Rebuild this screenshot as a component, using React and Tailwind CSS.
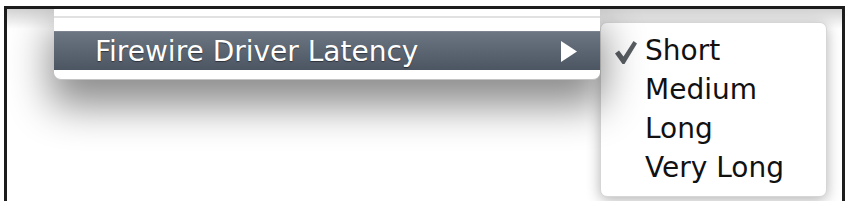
import React from "react";

const font = { fontFamily: '"DejaVu Sans", "Open Sans", sans-serif' };

function Check() {
  return (
    <svg width="22" height="23" viewBox="0 0 22 23" className="shrink-0">
      <path d="M0 12.5 L4 9.5 L8.5 15.5 L18.5 0 L22 2.5 L9.5 23 L7.5 23 Z" fill="#595e63" />
    </svg>
  );
}

export default function App() {
  const items = ["Short", "Medium", "Long", "Very Long"];
  return (
    <div className="w-[848px] h-[201px] bg-white overflow-hidden" style={font}>
      <div className="ml-[4px] mt-[6px] w-[841px] h-[200px] border-t-[3px] border-l-[3px] border-r-[3px] border-[#1c1c1c] overflow-hidden flex items-start bg-gradient-to-b from-[#d2d2d2] via-white via-[10%] to-white">
        <div className="ml-[47px] w-[546px] flex flex-col bg-white rounded-b-[7px] shadow-[0_22px_40px_4px_rgba(0,0,0,0.45)] border-b border-[#c4c4c4] relative z-10">
          <div className="h-[7px]" />
          <div className="h-[2px] bg-[#e1e1e1]" />
          <div className="h-[13px]" />
          <div className="h-[39px] flex items-center justify-between pl-[41px] pr-[23px] bg-gradient-to-b from-[#6c7683] to-[#4c5562] border-t border-[#7b8490]">
            <span className="text-[28px] leading-[39px] text-white [text-shadow:0_1px_1px_rgba(0,0,0,0.45)]">
              Firewire Driver Latency
            </span>
            <svg width="16" height="21" viewBox="0 0 16 21">
              <path d="M0 0 L16 10.5 L0 21 Z" fill="#ffffff" />
            </svg>
          </div>
          <div className="h-[9px]" />
        </div>
        <div className="mt-[13px] w-[227px] h-[175px] bg-white rounded-[7px] border border-[#d6d6d6] shadow-[0_3px_14px_rgba(0,0,0,0.3)] pt-[8px] flex flex-col">
          {items.map((it, i) => (
            <div key={it} className="h-[39px] flex items-center">
              <div className="w-[44px] flex justify-end pr-[8px] pt-[3px]">{i === 0 ? <Check /> : null}</div>
              <span className="text-[28px] leading-[39px] text-[#111]">{it}</span>
            </div>
          ))}
        </div>
      </div>
    </div>
  );
}
